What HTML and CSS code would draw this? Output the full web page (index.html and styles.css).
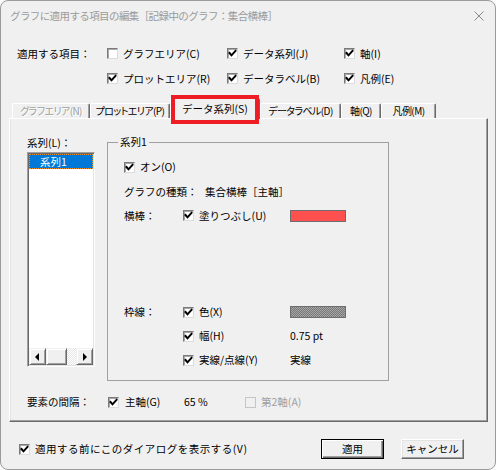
FILE: index.html
```html
<!DOCTYPE html>
<html lang="ja">
<head>
<meta charset="utf-8">
<title>グラフに適用する項目の編集</title>
<link rel="stylesheet" href="styles.css">
</head>
<body>
<div class="window">
  <div class="titlebar">
    <span class="title">グラフに適用する項目の編集［記録中のグラフ：集合横棒］</span>
    <svg class="close" width="10" height="10" viewBox="0 0 10 10"><path d="M0.5 0.5L9.5 9.5M9.5 0.5L0.5 9.5" stroke="#8a8a8a" stroke-width="1" fill="none"/></svg>
  </div>

  <div class="apply">
    <span class="lbl">適用する項目：</span>
    <span class="chk"><span class="box"></span>グラフエリア(C)</span>
    <span class="chk"><span class="box"><svg viewBox="0 0 9 9"><polyline points="1.5,4 3.5,6.3 7.5,1.8"/></svg></span>データ系列(J)</span>
    <span class="chk"><span class="box"><svg viewBox="0 0 9 9"><polyline points="1.5,4 3.5,6.3 7.5,1.8"/></svg></span>軸(I)</span>
    <span></span>
    <span class="chk"><span class="box"><svg viewBox="0 0 9 9"><polyline points="1.5,4 3.5,6.3 7.5,1.8"/></svg></span>プロットエリア(R)</span>
    <span class="chk"><span class="box"><svg viewBox="0 0 9 9"><polyline points="1.5,4 3.5,6.3 7.5,1.8"/></svg></span>データラベル(B)</span>
    <span class="chk"><span class="box"><svg viewBox="0 0 9 9"><polyline points="1.5,4 3.5,6.3 7.5,1.8"/></svg></span>凡例(E)</span>
  </div>

  <div class="tabs">
    <span class="tab tab-dis w78">グラフエリア(N)</span>
    <span class="tab w80">プロットエリア(P)</span>
    <span class="tab tab-sel w90">データ系列(S)</span>
    <span class="tab w81">データラベル(D)</span>
    <span class="tab w40">軸(Q)</span>
    <span class="tab w55">凡例(M)</span>
  </div>

  <div class="panel">
    <div class="panel-top">
      <div class="series-col">
        <div class="lbl">系列(L)：</div>
        <div class="listbox">
          <div class="item">系列1</div>
          <div class="hscroll">
            <span class="sb-btn"><span class="arr-l"></span></span>
            <span class="sb-thumb"></span>
            <span class="sb-track"></span>
            <span class="sb-btn"><span class="arr-r"></span></span>
          </div>
        </div>
      </div>

      <fieldset class="group">
        <legend>系列1</legend>
        <div class="gb-grid">
          <span class="chk span-all"><span class="box"><svg viewBox="0 0 9 9"><polyline points="1.5,4 3.5,6.3 7.5,1.8"/></svg></span>オン(O)</span>

          <div class="span-all type-row"><span class="type-lbl">グラフの種類：</span><span>集合横棒［主軸］</span></div>

          <span>横棒：</span>
          <span class="chk"><span class="box"><svg viewBox="0 0 9 9"><polyline points="1.5,4 3.5,6.3 7.5,1.8"/></svg></span>塗りつぶし(U)</span>
          <span class="swatch swatch-red"></span>

          <span class="span-all"></span>

          <span>枠線：</span>
          <span class="chk"><span class="box"><svg viewBox="0 0 9 9"><polyline points="1.5,4 3.5,6.3 7.5,1.8"/></svg></span>色(X)</span>
          <span class="swatch swatch-gray"></span>

          <span></span>
          <span class="chk"><span class="box"><svg viewBox="0 0 9 9"><polyline points="1.5,4 3.5,6.3 7.5,1.8"/></svg></span>幅(H)</span>
          <span>0.75 pt</span>

          <span></span>
          <span class="chk"><span class="box"><svg viewBox="0 0 9 9"><polyline points="1.5,4 3.5,6.3 7.5,1.8"/></svg></span>実線/点線(Y)</span>
          <span>実線</span>
        </div>
      </fieldset>
    </div>

    <div class="spacing">
      <span>要素の間隔：</span>
      <span class="chk gap6"><span class="box"><svg viewBox="0 0 9 9"><polyline points="1.5,4 3.5,6.3 7.5,1.8"/></svg></span>主軸(G)</span>
      <span>65 %</span>
      <span class="chk dis"><span class="box box-dis"></span>第2軸(A)</span>
    </div>
  </div>

  <div class="footer">
    <span class="chk"><span class="box"><svg viewBox="0 0 9 9"><polyline points="1.5,4 3.5,6.3 7.5,1.8"/></svg></span><span class="wide">適用する前にこのダイアログを表示する(V)</span></span>
    <button class="btn btn-default">適用</button>
    <button class="btn btn-cancel">キャンセル</button>
  </div>
</div>
</body>
</html>
```

FILE: styles.css
```css
html, body {
  margin: 0;
  padding: 0;
}

body {
  width: 496px;
  height: 470px;
  overflow: hidden;
  background: #fafafa;
  font-family: "Noto Sans CJK JP", "Noto Sans", sans-serif;
  font-size: 10.5px;
  line-height: 14px;
  color: #000;
}

.window {
  box-sizing: border-box;
  width: 496px;
  height: 470px;
  border: 1px solid #9b9b9b;
  border-radius: 8px;
  background: #f0f0f0;
  display: flex;
  flex-direction: column;
}

.titlebar {
  height: 30px;
  display: flex;
  align-items: center;
  padding: 0 11px 0 9px;
}

.title {
  flex: 1;
  color: #9a9a9a;
  white-space: nowrap;
  letter-spacing: -0.6px;
}

.close {
  display: block;
}

/* apply-to grid */
.apply {
  display: grid;
  grid-template-columns: 90px 120px 117px auto;
  grid-auto-rows: 25px;
  align-items: center;
  margin-top: 10px;
  padding-left: 16px;
}

.lbl {
  white-space: nowrap;
}

/* checkbox */
.chk {
  display: inline-flex;
  align-items: center;
  gap: 5px;
  white-space: nowrap;
}

.chk.gap6 {
  gap: 6px;
}

.wide {
  letter-spacing: 0.5px;
}

.box {
  box-sizing: border-box;
  flex: none;
  width: 11px;
  height: 11px;
  background: #fff;
  border: 1px solid;
  border-color: #7a7a7a #dcdcdc #dcdcdc #7a7a7a;
  box-shadow: inset 1px 1px 0 #a8a8a8;
}

.box svg {
  display: block;
  width: 9px;
  height: 9px;
}

.box polyline {
  fill: none;
  stroke: #000;
  stroke-width: 2;
  stroke-linecap: square;
}

.box-dis {
  background: #f0f0f0;
  border-color: #c6c6c6;
  box-shadow: none;
}

.dis {
  color: #a0a0a0;
}

/* tabs */
.tabs {
  display: flex;
  align-items: flex-end;
  height: 20px;
  margin-top: 7px;
  padding-left: 11px;
  position: relative;
  z-index: 1;
}

.tab {
  box-sizing: border-box;
  height: 15px;
  display: flex;
  align-items: center;
  justify-content: center;
  border-top: 1px solid #fff;
  border-left: 1px solid #fff;
  border-right: 1px solid #696969;
  box-shadow: inset -1px 0 0 #a0a0a0;
  border-radius: 2px 2px 0 0;
  white-space: nowrap;
  font-size: 10px;
  letter-spacing: -0.6px;
  font-feature-settings: "palt";
  background: #f0f0f0;
}

.w78 { width: 78px; }
.w80 { width: 80px; }
.w90 { width: 90px; }
.w81 { width: 81px; }
.w40 { width: 40px; }
.w55 { width: 55px; }

.tab-dis {
  color: #a0a0a0;
  text-shadow: 1px 1px 0 #fff;
}

.tab-sel {
  height: 21px;
  margin-bottom: -1px;
  position: relative;
  font-size: 10.5px;
  letter-spacing: 0;
  font-feature-settings: normal;
}

.tab-sel::after {
  content: "";
  position: absolute;
  left: 0;
  right: 0;
  top: -4px;
  bottom: -5px;
  border: 4px solid #ee1c24;
}

/* panel */
.panel {
  box-sizing: border-box;
  width: 479px;
  height: 304px;
  margin-left: 8px;
  border: 1px solid;
  border-color: #fff #696969 #696969 #fff;
  box-shadow: inset -1px -1px 0 #a0a0a0, inset 1px 0 0 #e3e3e3;
  padding: 16px 0 0 17px;
}

.panel-top {
  display: flex;
  align-items: flex-start;
  gap: 12px;
}

.series-col {
  width: 68px;
  padding-top: 1px;
}

.listbox {
  box-sizing: border-box;
  height: 215px;
  margin-top: 2px;
  border: 1px solid;
  border-color: #a0a0a0 #fff #fff #a0a0a0;
  box-shadow: inset 1px 1px 0 #696969, inset -1px -1px 0 #e3e3e3;
  padding: 1px;
  background: #fff;
  display: flex;
  flex-direction: column;
}

.item {
  box-sizing: border-box;
  height: 15px;
  line-height: 13px;
  padding-left: 10px;
  background: #0078d7;
  color: #fff;
  border: 1px dotted #e8902a;
}

.hscroll {
  margin-top: auto;
  height: 17px;
  display: flex;
}

.sb-btn,
.sb-thumb {
  box-sizing: border-box;
  flex: none;
  border: 1px solid;
  border-color: #f0f0f0 #696969 #696969 #f0f0f0;
  box-shadow: inset 1px 1px 0 #fff, inset -1px -1px 0 #a0a0a0;
  background: #f0f0f0;
}

.sb-btn {
  width: 17px;
  display: flex;
  align-items: center;
  justify-content: center;
}

.sb-thumb {
  width: 21px;
}

.sb-track {
  flex: 1;
  background: repeating-conic-gradient(#fff 0 25%, #e6e6e6 0 50%) 0 0 / 2px 2px;
}

.arr-l,
.arr-r {
  width: 0;
  height: 0;
  border-top: 4px solid transparent;
  border-bottom: 4px solid transparent;
}

.arr-l {
  border-right: 4px solid #000;
  margin-left: -1px;
}

.arr-r {
  border-left: 4px solid #000;
  margin-left: 1px;
}

/* group box */
.group {
  box-sizing: border-box;
  width: 282px;
  min-width: 0;
  margin: 0;
  padding: 6px 0 8px 16px;
  border: 1px solid #a0a0a0;
}

.group legend {
  padding: 0 2px;
  margin-left: -6px;
  line-height: 14px;
}

.gb-grid {
  display: grid;
  grid-template-columns: 59px 107px auto;
  grid-template-rows: 24px 25px 23px 73px 24px 24px 24px;
  align-items: center;
}

.span-all {
  grid-column: 1 / -1;
}

.type-row {
  display: flex;
  white-space: nowrap;
}

.type-lbl {
  width: 81px;
}

.swatch {
  box-sizing: border-box;
  width: 56px;
  height: 12px;
  border: 1px solid #6e6e6e;
}

.swatch-red {
  background: #ff5050;
}

.swatch-gray {
  background: repeating-conic-gradient(#7a7a7a 0 25%, #a4a4a4 0 50%) 0 0 / 2px 2px;
}

/* spacing row */
.spacing {
  display: grid;
  grid-template-columns: 81px 76px 61px auto;
  align-items: center;
  height: 24px;
  margin-top: 9px;
}

/* footer */
.footer {
  display: flex;
  align-items: center;
  height: 20px;
  margin-top: 17px;
  padding: 0 31px 0 18px;
}

.btn {
  box-sizing: border-box;
  width: 63px;
  height: 20px;
  padding: 0;
  margin: 0;
  font: inherit;
  color: #000;
  background: #f0f0f0;
  display: flex;
  align-items: center;
  justify-content: center;
}

.btn-default {
  margin-left: auto;
  border: 1px solid #000;
  box-shadow: inset 1px 1px 0 #fff, inset -1px -1px 0 #696969, inset -2px -2px 0 #a0a0a0;
}

.btn-cancel {
  margin-left: 17px;
  border: 1px solid;
  border-color: #fff #696969 #696969 #fff;
  box-shadow: inset -1px -1px 0 #a0a0a0, inset 1px 1px 0 #e3e3e3;
}
```
